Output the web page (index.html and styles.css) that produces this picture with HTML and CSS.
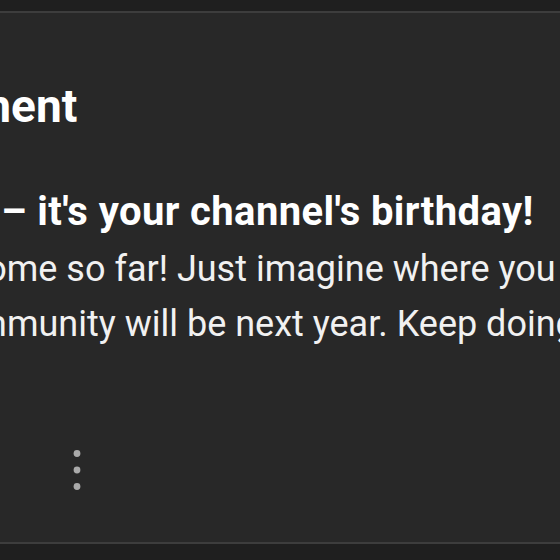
FILE: index.html
```html
<!DOCTYPE html>
<html lang="en">
<head>
    <meta charset="UTF-8">
    <title>Channel milestone</title>
    <link rel="stylesheet" href="styles.css">
</head>
<body>
    <div class="card">
        <div class="card-title">Achievement</div>
        <div class="card-headline">Congratulations – it's your channel's birthday!</div>
        <div class="card-text line-one">You've come so far! Just imagine where you</div>
        <div class="card-text line-two">and your community will be next year. Keep doing what you do!</div>
        <div class="card-actions">
            <svg class="more-icon" width="14" height="48" viewBox="0 0 14 48">
                <circle cx="7" cy="7.5" r="3.4"/>
                <circle cx="7" cy="24" r="3.4"/>
                <circle cx="7" cy="40.5" r="3.4"/>
            </svg>
        </div>
    </div>
</body>
</html>
```

FILE: styles.css
```css
body {
    margin: 0;
    padding-top: 11px;
    background-color: #1f1f1f;
    font-family: Roboto, 'Noto Sans', sans-serif;
    overflow: hidden;
}

.card {
    background-color: #282828;
    border-top: 2px solid #3d3d3d;
    border-bottom: 2px solid #3d3d3d;
    height: 533px;
    padding-top: 65px;
    box-sizing: border-box;
    overflow: hidden;
    white-space: nowrap;
}

.card-title {
    font-size: 46px;
    line-height: 56px;
    font-weight: 700;
    color: #ffffff;
    margin-left: -194px;
    margin-bottom: 50px;
}

.card-headline {
    font-size: 40px;
    line-height: 55px;
    font-weight: 700;
    letter-spacing: 0.4px;
    color: #ffffff;
    margin-left: -302px;
}

.card-text {
    font-size: 36px;
    line-height: 55px;
    color: #f1f1f1;
}

.line-one {
    margin-top: 3px;
    margin-left: -145px;
}

.line-two {
    margin-left: -211px;
}

.card-actions {
    margin-top: 94px;
    padding-left: 70px;
}

.more-icon {
    display: block;
    fill: #aaaaaa;
}
```
